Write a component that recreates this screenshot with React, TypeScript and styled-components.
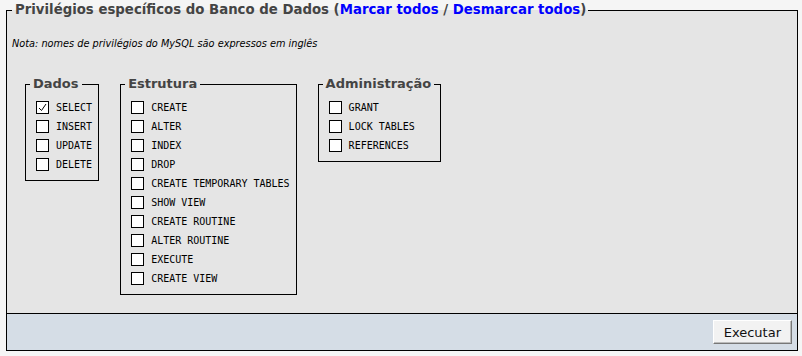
import React from 'react'
import styled, { createGlobalStyle } from 'styled-components'

const GlobalStyle = createGlobalStyle`
	html, body {
		margin: 0;
		padding: 0;
		background: #f5f5f5;
		font-family: 'DejaVu Sans', sans-serif;
	}
`

interface Group {
	title: string
	items: { name: string; checked?: boolean }[]
}

const groups: Group[] = [
	{
		title: 'Dados',
		items: [{ name: 'SELECT', checked: true }, { name: 'INSERT' }, { name: 'UPDATE' }, { name: 'DELETE' }],
	},
	{
		title: 'Estrutura',
		items: [
			{ name: 'CREATE' },
			{ name: 'ALTER' },
			{ name: 'INDEX' },
			{ name: 'DROP' },
			{ name: 'CREATE TEMPORARY TABLES' },
			{ name: 'SHOW VIEW' },
			{ name: 'CREATE ROUTINE' },
			{ name: 'ALTER ROUTINE' },
			{ name: 'EXECUTE' },
			{ name: 'CREATE VIEW' },
		],
	},
	{
		title: 'Administração',
		items: [{ name: 'GRANT' }, { name: 'LOCK TABLES' }, { name: 'REFERENCES' }],
	},
]

const App: React.FC = () => {
	return (
		<Page>
			<GlobalStyle />
			<MainFieldset>
				<MainLegend>
					Privilégios específicos do Banco de Dados (<Link href="#">Marcar todos</Link> /{' '}
					<Link href="#">Desmarcar todos</Link>)
				</MainLegend>
				<Note>Nota: nomes de privilégios do MySQL são expressos em inglês</Note>
				<Groups>
					{groups.map((group) => (
						<GroupFieldset key={group.title}>
							<GroupLegend>{group.title}</GroupLegend>
							<List>
								{group.items.map((item) => (
									<Row key={item.name}>
										<Box>
											{item.checked && (
												<svg width="11" height="11" viewBox="0 0 11 11">
													<polyline points="2,6 4.5,8.5 9,2" fill="none" stroke="#000" strokeWidth="1" />
												</svg>
											)}
										</Box>
										<Label>{item.name}</Label>
									</Row>
								))}
							</List>
						</GroupFieldset>
					))}
				</Groups>
			</MainFieldset>
			<Footer>
				<Button type="button">Executar</Button>
			</Footer>
		</Page>
	)
}

const Page = styled.div`
	width: 802px;
	height: 356px;
	padding-top: 2px;
	box-sizing: border-box;
`

const MainFieldset = styled.fieldset`
	margin: 0 4px 0 6px;
	padding: 0 5px 18px 5px;
	border: 1px solid #000;
	background: #e5e5e5;
	min-width: 0;
`

const MainLegend = styled.legend`
	padding: 0 2px 0 3px;
	font-size: 13.3px;
	line-height: 16px;
	font-weight: bold;
	color: #444;
`

const Link = styled.a`
	color: #0000ff;
	text-decoration: none;
`

const Note = styled.div`
	margin-top: 20px;
	font-size: 9.75px;
	line-height: 12px;
	font-style: italic;
	color: #000;
`

const Groups = styled.div`
	display: flex;
	align-items: flex-start;
	gap: 21px;
	margin: 26px 0 0 13px;
`

const GroupFieldset = styled.fieldset`
	margin: 0;
	padding: 0 6px 6px 4px;
	border: 1px solid #000;
	min-width: 0;
`

const GroupLegend = styled.legend`
	padding: 0 3px;
	font-size: 13px;
	line-height: 16px;
	font-weight: bold;
	color: #444;
`

const List = styled.div`
	display: flex;
	flex-direction: column;
	padding: 6px 0 0 6px;
`

const Row = styled.label`
	display: flex;
	align-items: center;
	gap: 7px;
	height: 19px;
`

const Box = styled.span`
	display: flex;
	align-items: center;
	justify-content: center;
	width: 11px;
	height: 11px;
	border: 1px solid #000;
	background: #fff;
`

const Label = styled.span`
	font-family: 'DejaVu Sans Mono', monospace;
	font-size: 10px;
	color: #000;
	white-space: nowrap;
`

const Footer = styled.div`
	display: flex;
	justify-content: flex-end;
	margin: 0 4px 0 6px;
	padding: 6px 5px 6px 0;
	border: 1px solid #000;
	border-top: none;
	background: #d5dde6;
`

const Button = styled.button`
	height: 24px;
	padding: 0 10px;
	font-family: 'DejaVu Sans', sans-serif;
	font-size: 13px;
	color: #111;
	background: #f2f2f2;
	border: 1px solid;
	border-color: #fff #777 #777 #fff;
	box-shadow: inset -1px -1px 0 #bbb;
`

export default App
